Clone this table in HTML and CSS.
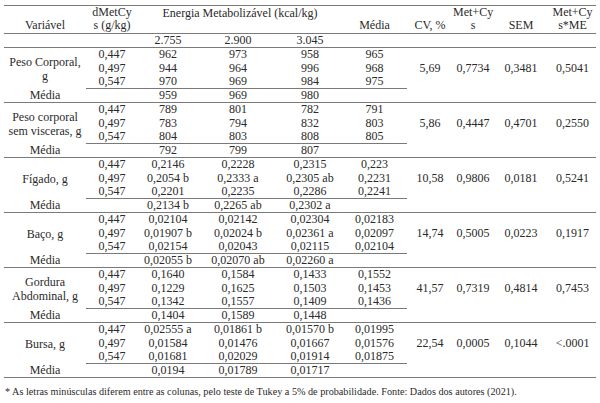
FILE: index.html
```html
<!DOCTYPE html>
<html lang="pt">
<head>
<meta charset="utf-8">
<title>Tabela</title>
<link rel="stylesheet" href="styles.css">
</head>
<body>
<table class="tbl">
  <colgroup>
    <col class="c-var"><col class="c-dm"><col class="c-e1"><col class="c-e2"><col class="c-e3"><col class="c-med"><col class="c-cv"><col class="c-mc"><col class="c-sem"><col class="c-me">
  </colgroup>
  <thead>
    <tr class="h1">
      <th>Variável</th>
      <th>dMetCy<br>s (g/kg)</th>
      <th colspan="3" class="top">Energia Metabolizável (kcal/kg)</th>
      <th>Média</th>
      <th>CV, %</th>
      <th>Met+Cy<br>s</th>
      <th>SEM</th>
      <th>Met+Cy<br>s*ME</th>
    </tr>
    <tr class="h2">
      <th></th><th></th><th>2.755</th><th>2.900</th><th>3.045</th><th></th><th></th><th></th><th></th><th></th>
    </tr>
  </thead>
  <tbody>
    <tr class="ra"><td rowspan="3" class="var">Peso Corporal,<br>g</td><td>0,447</td><td>962</td><td>973</td><td>958</td><td>965</td><td rowspan="3">5,69</td><td rowspan="3">0,7734</td><td rowspan="3">0,3481</td><td rowspan="3">0,5041</td></tr>
    <tr class="rb"><td>0,497</td><td>944</td><td>964</td><td>996</td><td>968</td></tr>
    <tr class="rc"><td>0,547</td><td>970</td><td>969</td><td>984</td><td>975</td></tr>
    <tr class="rm"><td>Média</td><td></td><td>959</td><td>969</td><td>980</td><td></td><td></td><td></td><td></td><td></td></tr>

    <tr class="ra"><td rowspan="3" class="var">Peso corporal<br>sem visceras, g</td><td>0,447</td><td>789</td><td>801</td><td>782</td><td>791</td><td rowspan="3">5,86</td><td rowspan="3">0,4447</td><td rowspan="3">0,4701</td><td rowspan="3">0,2550</td></tr>
    <tr class="rb"><td>0,497</td><td>783</td><td>794</td><td>832</td><td>803</td></tr>
    <tr class="rc"><td>0,547</td><td>804</td><td>803</td><td>808</td><td>805</td></tr>
    <tr class="rm"><td>Média</td><td></td><td>792</td><td>799</td><td>807</td><td></td><td></td><td></td><td></td><td></td></tr>

    <tr class="ra"><td rowspan="3" class="var">Fígado, g</td><td>0,447</td><td>0,2146</td><td>0,2228</td><td>0,2315</td><td>0,223</td><td rowspan="3">10,58</td><td rowspan="3">0,9806</td><td rowspan="3">0,0181</td><td rowspan="3">0,5241</td></tr>
    <tr class="rb"><td>0,497</td><td>0,2054 b</td><td>0,2333 a</td><td>0,2305 ab</td><td>0,2231</td></tr>
    <tr class="rc"><td>0,547</td><td>0,2201</td><td>0,2235</td><td>0,2286</td><td>0,2241</td></tr>
    <tr class="rm"><td>Média</td><td></td><td>0,2134 b</td><td>0,2265 ab</td><td>0,2302 a</td><td></td><td></td><td></td><td></td><td></td></tr>

    <tr class="ra"><td rowspan="3" class="var">Baço, g</td><td>0,447</td><td>0,02104</td><td>0,02142</td><td>0,02304</td><td>0,02183</td><td rowspan="3">14,74</td><td rowspan="3">0,5005</td><td rowspan="3">0,0223</td><td rowspan="3">0,1917</td></tr>
    <tr class="rb"><td>0,497</td><td>0,01907 b</td><td>0,02024 b</td><td>0,02361 a</td><td>0,02097</td></tr>
    <tr class="rc"><td>0,547</td><td>0,02154</td><td>0,02043</td><td>0,02115</td><td>0,02104</td></tr>
    <tr class="rm"><td>Média</td><td></td><td>0,02055 b</td><td>0,02070 ab</td><td>0,02260 a</td><td></td><td></td><td></td><td></td><td></td></tr>

    <tr class="ra"><td rowspan="3" class="var">Gordura<br>Abdominal, g</td><td>0,447</td><td>0,1640</td><td>0,1584</td><td>0,1433</td><td>0,1552</td><td rowspan="3">41,57</td><td rowspan="3">0,7319</td><td rowspan="3">0,4814</td><td rowspan="3">0,7453</td></tr>
    <tr class="rb"><td>0,497</td><td>0,1229</td><td>0,1625</td><td>0,1503</td><td>0,1453</td></tr>
    <tr class="rc"><td>0,547</td><td>0,1342</td><td>0,1557</td><td>0,1409</td><td>0,1436</td></tr>
    <tr class="rm"><td>Média</td><td></td><td>0,1404</td><td>0,1589</td><td>0,1448</td><td></td><td></td><td></td><td></td><td></td></tr>

    <tr class="ra"><td rowspan="3" class="var">Bursa, g</td><td>0,447</td><td>0,02555 a</td><td>0,01861 b</td><td>0,01570 b</td><td>0,01995</td><td rowspan="3">22,54</td><td rowspan="3">0,0005</td><td rowspan="3">0,1044</td><td rowspan="3">&lt;.0001</td></tr>
    <tr class="rb"><td>0,497</td><td>0,01584</td><td>0,01476</td><td>0,01667</td><td>0,01576</td></tr>
    <tr class="rc"><td>0,547</td><td>0,01681</td><td>0,02029</td><td>0,01914</td><td>0,01875</td></tr>
    <tr class="rm"><td>Média</td><td></td><td>0,0194</td><td>0,01789</td><td>0,01717</td><td></td><td></td><td></td><td></td><td></td></tr>
  </tbody>
</table>
<p class="note">* As letras minúsculas diferem entre as colunas, pelo teste de Tukey a 5% de probabilidade. Fonte: Dados dos autores (2021).</p>
</body>
</html>
```
FILE: styles.css
```css
html, body {
  margin: 0;
  background: #ffffff;
}
body {
  padding: 5px 4px 0 4px;
  font-family: "Liberation Serif", "Times New Roman", serif;
  color: #2a2a2a;
}
.tbl {
  width: 592px;
  table-layout: fixed;
  border-collapse: separate;
  border-spacing: 0;
  border-top: 1px solid #7a7a7a;
  font-size: 12px;
  line-height: 13px;
}
.c-var { width: 82px; }
.c-dm { width: 52px; }
.c-e1 { width: 60px; }
.c-e2 { width: 80px; }
.c-e3 { width: 64px; }
.c-med { width: 65px; }
.c-cv { width: 46px; }
.c-mc { width: 40px; }
.c-sem { width: 56px; }
.c-me { width: 47px; }

.tbl th, .tbl td {
  padding: 0;
  text-align: center;
  font-weight: normal;
  white-space: nowrap;
  vertical-align: middle;
}
.h1 { height: 28px; }
.h1 th {
  vertical-align: bottom;
  border-bottom: 1px solid #7a7a7a;
  padding-bottom: 1px;
}
.h1 th.top {
  vertical-align: top;
  padding-top: 1px;
  padding-bottom: 0;
}
.h2 { height: 14px; }
.h2 th { border-bottom: 1px solid #7a7a7a; }

.ra { height: 13px; }
.rb { height: 14px; }
.rc { height: 14px; }
.rm { height: 14px; }
.var { line-height: 14px; }
.rc td { border-bottom: 1px solid #7a7a7a; }
.rm td { border-bottom: 1px solid #7a7a7a; }

.note {
  margin: 7px 0 0 1px;
  font-size: 10.2px;
  line-height: 13px;
  white-space: nowrap;
}
```
